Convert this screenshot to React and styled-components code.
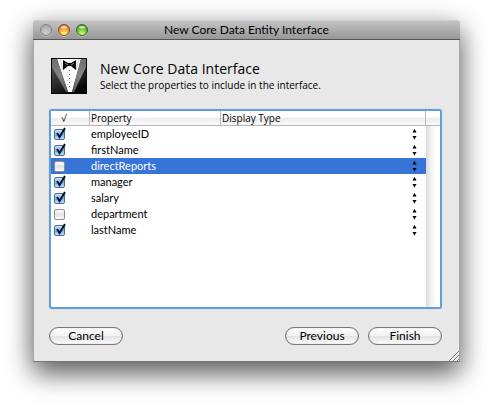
import React, { useState } from "react";
import styled, { createGlobalStyle, css } from "styled-components";

const GlobalStyle = createGlobalStyle`
  *, *::before, *::after { box-sizing: border-box; }
  body {
    margin: 0;
    background: #fff;
    color: #000;
    font-family: Lato, "Lucida Grande", sans-serif;
    font-size: 11px;
  }
  button, select, input { font: inherit; color: inherit; margin: 0; }
`;

const wideFace = css`
  font-family: "Open Sans", "Lucida Grande", sans-serif;
`;

const Desktop = styled.main`
  padding: 20px 33px 47px;
  overflow: hidden;
`;

const Dialog = styled.section`
  position: relative;
  background: #e8e8e8;
  border: 1px solid #a6a6a6;
  border-top: 0;
  border-bottom-color: #777;
  border-radius: 4px 4px 0 0;
  box-shadow: 0 12px 26px rgba(0, 0, 0, 0.55), 0 4px 28px rgba(0, 0, 0, 0.2);
`;

const TitleBar = styled.header`
  display: grid;
  grid-template-columns: 60px 1fr 60px;
  align-items: center;
  height: 20px;
  margin: 0 -1px;
  padding: 0 7px;
  border-top: 1px solid #cfcfcf;
  border-bottom: 1px solid #555;
  border-radius: 4px 4px 0 0;
  background: linear-gradient(#c3c3c3, #979797);
`;

const Lights = styled.div`
  display: flex;
  gap: 6px;
`;

const lightTones = {
  idle: css`
    border-color: #858585;
    background: radial-gradient(circle at 50% 80%, #cfcfcf, #a9a9a9 80%);
  `,
  amber: css`
    border-color: #8b4a22;
    background: radial-gradient(ellipse 5px 2px at 50% 22%, #fff3e6, transparent),
      radial-gradient(circle at 50% 90%, #ffee74 10%, #f7a33a 50%, #d2501a 90%);
  `,
  green: css`
    border-color: #38661f;
    background: radial-gradient(ellipse 5px 2px at 50% 22%, #f0ffe6, transparent),
      radial-gradient(circle at 50% 90%, #c5f57c 10%, #6cc53a 50%, #2d8418 90%);
  `,
};

const Light = styled.button`
  width: 12px;
  height: 12px;
  padding: 0;
  border: 1px solid;
  border-radius: 50%;
  box-shadow: 0 1px 0 rgba(255, 255, 255, 0.35);
  ${({ $tone }) => lightTones[$tone]}
`;

const WindowTitle = styled.h1`
  margin: 0;
  font-size: 12px;
  line-height: 18px;
  font-weight: 400;
  text-align: center;
  white-space: nowrap;
`;

const Body = styled.div`
  padding: 18px 17px 16px 15px;
`;

const Intro = styled.div`
  display: flex;
  align-items: center;
  gap: 13px;
  padding-left: 2px;
  margin-bottom: 15px;
`;

const Heading = styled.h2`
  ${wideFace}
  margin: 0;
  font-size: 14px;
  line-height: 18px;
  font-weight: 400;
`;

const Hint = styled.p`
  ${wideFace}
  margin: 0;
  font-size: 10px;
  line-height: 14px;
`;

const ListBox = styled.div`
  display: flex;
  min-height: 200px;
  border: 2px solid #629fd8;
  border-radius: 3px;
  background: #fff;
  box-shadow: 0 0 1px #8fbbe6;
`;

const headFace = css`
  height: 15px;
  border-bottom: 1px solid #b5b5b5;
  background: linear-gradient(#fff 0 45%, #ececec 50%, #fafafa);
`;

const PropertyTable = styled.table`
  flex: 1;
  align-self: flex-start;
  min-width: 0;
  table-layout: fixed;
  border-collapse: separate;
  border-spacing: 0;
`;

const HeadCell = styled.th`
  ${headFace}
  ${wideFace}
  width: ${({ $width }) => $width || "auto"};
  padding: 0 0 0 ${({ $inset }) => ($inset ? "10px" : "1px")};
  border-right: 1px solid #b9b9b9;
  font-size: 10px;
  line-height: 14px;
  font-weight: 400;
  text-align: left;
`;

const Row = styled.tr`
  height: 16px;
  ${({ $selected }) =>
    $selected &&
    css`
      color: #fff;
      background: #3874d7;
    `}
`;

const Cell = styled.td`
  height: 16px;
  padding: 0 0 0 ${({ $inset }) => ($inset ? "3px" : "1px")};
  line-height: 16px;
`;

const TickFrame = styled.span`
  position: relative;
  display: block;
  width: 11px;
  height: 11px;
`;

const TickBox = styled.input`
  appearance: none;
  display: block;
  width: 11px;
  height: 11px;
  border: 1px solid #8e8e8e;
  border-radius: 2px;
  background: linear-gradient(#fff, #e2e2e2 50%, #fafafa);

  &:checked {
    border-color: #4a6b9c;
    background: linear-gradient(#cfe4fa, #73b0ec 50%, #b5e2fd);
  }
`;

const TickMark = styled.svg`
  position: absolute;
  left: 1px;
  top: -2px;
  pointer-events: none;
`;

const TypePicker = styled.div`
  display: grid;
  align-items: center;
  justify-items: end;
  height: 16px;
  padding-right: 9px;

  > * { grid-area: 1 / 1; }
`;

const TypeSelect = styled.select`
  appearance: none;
  width: 100%;
  height: 16px;
  padding: 0;
  border: 0;
  background: transparent;
`;

const Arrows = styled.svg`
  color: #000;
  pointer-events: none;
`;

const ScrollTrack = styled.div`
  width: 14px;
  background: linear-gradient(90deg, #dcdcdc, #f4f4f4 40%, #fff 75%);
`;

const TrackCap = styled.div`
  ${headFace}
`;

const Actions = styled.footer`
  display: flex;
  gap: 9px;
  margin-top: 18px;
`;

const PushButton = styled.button`
  width: 74px;
  height: 18px;
  padding: 0;
  border: 1px solid #777;
  border-radius: 9px;
  background: linear-gradient(#fff, #f2f2f2 48%, #e3e3e3 52%, #fcfcfc);
  box-shadow: inset 0 0 1px #888;
  font-size: 12px;
  line-height: 16px;
  ${({ $leading }) => $leading && "margin-right: auto;"}
`;

const Grip = styled.svg`
  position: absolute;
  right: 0;
  bottom: 0;
`;

function TuxedoIcon() {
  return (
    <svg width="36" height="36" viewBox="0 0 36 36" aria-hidden="true">
      <defs>
        <linearGradient id="suit" x1="0" y1="0" x2="0.6" y2="1">
          <stop offset="0" stopColor="#666" />
          <stop offset="0.5" stopColor="#333" />
          <stop offset="1" stopColor="#050505" />
        </linearGradient>
        <linearGradient id="lapel" x1="0" y1="0" x2="0" y2="1">
          <stop offset="0" stopColor="#6e6e6e" />
          <stop offset="0.5" stopColor="#858585" />
          <stop offset="1" stopColor="#555" />
        </linearGradient>
      </defs>
      <rect width="36" height="36" fill="url(#suit)" />
      <path d="M6 1h24l-9 33h-4z" fill="#fafafa" />
      <path d="M1 1h5l11 33h-2L1 9z" fill="url(#lapel)" />
      <path d="M35 1h-5l-9 33h2L35 9z" fill="url(#lapel)" />
      <path d="M9 1l3 11 5-4M28 1l-3 11-5-4" fill="none" stroke="#d5d5d5" />
      <path d="M12 2l5 3h3l5-3v10l-5-4h-3l-5 4z" fill="#0b0b0b" />
      <path d="M14 5l3 2M23 5l-3 2" stroke="#888" />
      <path d="M18.500 12v20" stroke="#666" strokeDasharray="1 3" />
      <path d="M16.500 14v14" stroke="#c4c4c4" strokeDasharray="1 3" />
      <rect x="0.500" y="0.500" width="35" height="35" fill="none" stroke="#080808" />
    </svg>
  );
}

function PropertyRow({ name, included, selected, onToggle }) {
  return (
    <Row $selected={selected}>
      <Cell $inset>
        <TickFrame>
          <TickBox type="checkbox" id={name} checked={included} onChange={onToggle} />
          {included && (
            <TickMark width="11" height="12" viewBox="0 0 11 12" aria-hidden="true">
              <path d="M2 6l2.500 4L10 1" fill="none" stroke="#0a0f1c" strokeWidth="2" />
            </TickMark>
          )}
        </TickFrame>
      </Cell>
      <Cell>
        <label htmlFor={name}>{name}</label>
      </Cell>
      <Cell>
        <TypePicker>
          <TypeSelect aria-label={`Display type of ${name}`} defaultValue="">
            <option value="" />
          </TypeSelect>
          <Arrows width="5" height="12" viewBox="0 0 5 12" aria-hidden="true">
            <path d="M2.500 1L4.600 4.500H0.400zM0.400 8h4.200l-2.100 3.500z" fill="currentColor" />
          </Arrows>
        </TypePicker>
      </Cell>
    </Row>
  );
}

const initialProperties = [
  { name: "employeeID", included: true },
  { name: "firstName", included: true },
  { name: "directReports", included: false },
  { name: "manager", included: true },
  { name: "salary", included: true },
  { name: "department", included: false },
  { name: "lastName", included: true },
];

export default function App() {
  const [properties, setProperties] = useState(initialProperties);
  const toggle = (name) =>
    setProperties((list) =>
      list.map((p) => (p.name === name ? { ...p, included: !p.included } : p))
    );

  return (
    <Desktop>
      <GlobalStyle />
      <Dialog>
        <TitleBar>
          <Lights>
            <Light type="button" aria-label="Close" $tone="idle" />
            <Light type="button" aria-label="Minimize" $tone="amber" />
            <Light type="button" aria-label="Zoom" $tone="green" />
          </Lights>
          <WindowTitle>New Core Data Entity Interface</WindowTitle>
        </TitleBar>
        <Body>
          <Intro>
            <TuxedoIcon />
            <div>
              <Heading>New Core Data Interface</Heading>
              <Hint>Select the properties to include in the interface.</Hint>
            </div>
          </Intro>
          <ListBox>
            <PropertyTable>
              <thead>
                <tr>
                  <HeadCell $width="39px" $inset>√</HeadCell>
                  <HeadCell $width="131px">Property</HeadCell>
                  <HeadCell>Display Type</HeadCell>
                </tr>
              </thead>
              <tbody>
                {properties.map((p) => (
                  <PropertyRow
                    key={p.name}
                    name={p.name}
                    included={p.included}
                    selected={p.name === "directReports"}
                    onToggle={() => toggle(p.name)}
                  />
                ))}
              </tbody>
            </PropertyTable>
            <ScrollTrack>
              <TrackCap />
            </ScrollTrack>
          </ListBox>
          <Actions>
            <PushButton type="button" $leading>Cancel</PushButton>
            <PushButton type="button">Previous</PushButton>
            <PushButton type="button">Finish</PushButton>
          </Actions>
        </Body>
        <Grip width="10" height="10" viewBox="0 0 10 10" aria-hidden="true">
          <path d="M0 10L10 0M4 10l6-6M8 10l2-2" stroke="#777" fill="none" />
          <path d="M1 10l9-9M5 10l5-5" stroke="#fff" fill="none" opacity="0.7" />
        </Grip>
      </Dialog>
    </Desktop>
  );
}
